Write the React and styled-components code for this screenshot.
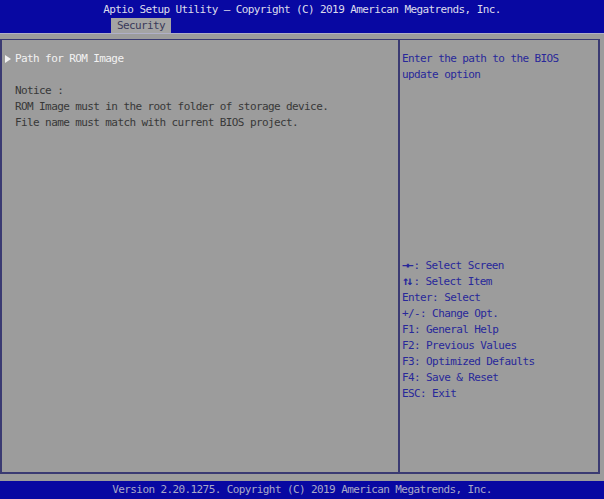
import React from 'react'
import styled, { createGlobalStyle } from 'styled-components'

const GlobalStyle = createGlobalStyle`
    html, body {
        margin: 0;
        padding: 0;
        background: #9c9c9c;
    }
`;

const Screen = styled.div`
    width: 604px;
    height: 499px;
    display: flex;
    flex-direction: column;
    background: #9c9c9c;
    font-family: "DejaVu Sans Mono", "Liberation Mono", monospace;
    font-size: 11px;
    letter-spacing: -0.6px;
    line-height: 16px;
    overflow: hidden;
`;

const Header = styled.div`
    height: 33px;
    background: #0808a2;
    border-bottom: 1px solid #b0b0c8;
    display: flex;
    flex-direction: column;
`;

const Title = styled.div`
    height: 18px;
    line-height: 20px;
    text-align: center;
    color: #dcdcec;
`;

const TabRow = styled.div`
    flex: 1;
    display: flex;
    align-items: flex-end;
    padding-left: 111px;
`;

const Tab = styled.div`
    width: 60px;
    height: 15px;
    line-height: 15px;
    background: #a4a4a4;
    color: #3a3a5a;
    text-align: center;
`;

const Body = styled.div`
    flex: 1;
    padding: 5px 4px 7px 0;
    display: flex;
`;

const Frame = styled.div`
    flex: 1;
    display: grid;
    grid-template-columns: 398px 1fr;
    border: 2px solid #3a3a72;
    border-top-width: 1px;
`;

const Main = styled.div`
    padding: 11px 0 0 13px;
    border-right: 2px solid #3a3a72;
`;

const Item = styled.div`
    position: relative;
    color: ${p => p.$active ? '#f2f2f2' : '#383838'};
    margin-bottom: ${p => p.$gap ? '16px' : '0'};
`;

const Pointer = styled.span`
    position: absolute;
    left: -10px;
    top: 4px;
    width: 0;
    height: 0;
    border-top: 4px solid transparent;
    border-bottom: 4px solid transparent;
    border-left: 6px solid #f2f2f2;
`;

const Side = styled.div`
    display: flex;
    flex-direction: column;
    padding: 11px 0 70px 2px;
    color: #28289a;
`;

const Keys = styled.div`
    margin-top: auto;
`;

const KeyLine = styled.div`
    height: 16px;
`;

const Key = styled.span`
    font-weight: bold;
    font-size: 12px;
    line-height: 0;
    letter-spacing: -3px;
    margin-right: 3px;
`;

const Footer = styled.div`
    height: 18px;
    line-height: 18px;
    background: #0808a2;
    color: #a8a8c8;
    text-align: center;
`;

const keys = [
    'Enter: Select',
    '+/-: Change Opt.',
    'F1: General Help',
    'F2: Previous Values',
    'F3: Optimized Defaults',
    'F4: Save & Reset',
    'ESC: Exit',
]

function App() {
    return (
        <Screen>
            <GlobalStyle />
            <Header>
                <Title>Aptio Setup Utility – Copyright (C) 2019 American Megatrends, Inc.</Title>
                <TabRow>
                    <Tab>Security</Tab>
                </TabRow>
            </Header>
            <Body>
                <Frame>
                    <Main>
                        <Item $active $gap><Pointer />Path for ROM Image</Item>
                        <Item>Notice :</Item>
                        <Item>ROM Image must in the root folder of storage device.</Item>
                        <Item>File name must match with current BIOS project.</Item>
                    </Main>
                    <Side>
                        <div>Enter the path to the BIOS</div>
                        <div>update option</div>
                        <Keys>
                            <KeyLine><Key>→←</Key>: Select Screen</KeyLine>
                            <KeyLine><Key>↑↓</Key>: Select Item</KeyLine>
                            {keys.map(k => <KeyLine key={k}>{k}</KeyLine>)}
                        </Keys>
                    </Side>
                </Frame>
            </Body>
            <Footer>Version 2.20.1275. Copyright (C) 2019 American Megatrends, Inc.</Footer>
        </Screen>
    )
}

export default App
